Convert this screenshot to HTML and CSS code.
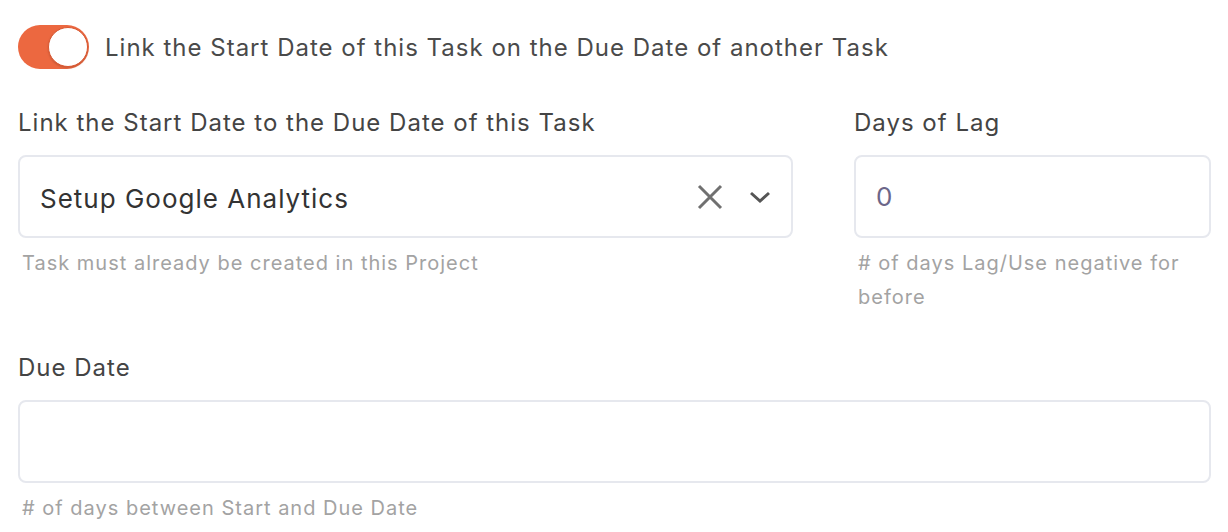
FILE: index.html
```html
<!DOCTYPE html>
<html lang="en">

<head>
    <meta charset="UTF-8">
    <meta name="viewport" content="width=device-width, initial-scale=1.0">
    <title>Task Dependency</title>
    <link rel="stylesheet" href="styles.css">
</head>

<body>
    <div class="form">
        <label class="switch-row">
            <span class="switch"><span class="knob"></span></span>
            <span class="switch-label">Link the Start Date of this Task on the Due Date of another Task</span>
        </label>

        <div class="form-row">
            <div class="field">
                <div class="field-label">Link the Start Date to the Due Date of this Task</div>
                <div class="select">
                    <span class="select-value">Setup Google Analytics</span>
                    <svg class="icon-clear" width="26" height="26" viewBox="0 0 26 26">
                        <path d="M2 2L24 24M24 2L2 24" stroke="#707070" stroke-width="3" fill="none" />
                    </svg>
                    <svg class="icon-chevron" width="22" height="12" viewBox="0 0 22 12">
                        <path d="M2 2L11 10L20 2" stroke="#555" stroke-width="3" fill="none" />
                    </svg>
                </div>
                <div class="field-help">Task must already be created in this Project</div>
            </div>

            <div class="field">
                <div class="field-label">Days of Lag</div>
                <div class="input"><span class="input-value">0</span></div>
                <div class="field-help">
                    # of days Lag/Use negative for before
                </div>
            </div>
        </div>

        <div class="field">
            <div class="field-label">Due Date</div>
            <div class="input"></div>
            <div class="field-help"># of days between Start and Due Date</div>
        </div>
    </div>
</body>

</html>
```

FILE: styles.css
```css
body {
    font-family: Inter, "Noto Sans", sans-serif;
    margin: 0;
    color: #444;
    background: #fff;
    letter-spacing: 1px;
}

.form {
    padding: 25px 17px 0 18px;
}

.switch-row {
    display: flex;
    align-items: center;
    gap: 16px;
    margin-bottom: 36px;
}

.switch {
    width: 71px;
    height: 44px;
    border-radius: 22px;
    background-color: #ec6840;
    display: flex;
    align-items: center;
    justify-content: flex-end;
    padding: 0 1px;
    box-sizing: border-box;
}

.knob {
    width: 40px;
    height: 40px;
    border-radius: 50%;
    background: #fff;
    border: 1px solid #d9562f;
    box-sizing: border-box;
    box-shadow: 0 1px 2px rgba(0, 0, 0, 0.15);
}

.switch-label {
    font-size: 24px;
    color: #4a4a4a;
}

.form-row {
    display: grid;
    grid-template-columns: 775px 1fr;
    gap: 61px;
    margin-bottom: 36px;
}

.field-label {
    font-size: 24px;
    line-height: 36px;
    color: #444;
    margin-bottom: 14px;
}

.select,
.input {
    height: 83px;
    border: 2px solid #e6e8ee;
    border-radius: 8px;
    box-sizing: border-box;
    display: flex;
    align-items: center;
    padding: 0 20px;
}

.select-value {
    flex: 1;
    font-size: 26px;
    color: #333;
    padding-top: 3px;
}

.icon-clear {
    margin-right: 26px;
}

.input-value {
    font-size: 26px;
    color: #6c6689;
}

.field-help {
    margin-top: 8px;
    font-size: 20px;
    line-height: 34px;
    color: #a3a3a3;
    padding-left: 4px;
}
```
